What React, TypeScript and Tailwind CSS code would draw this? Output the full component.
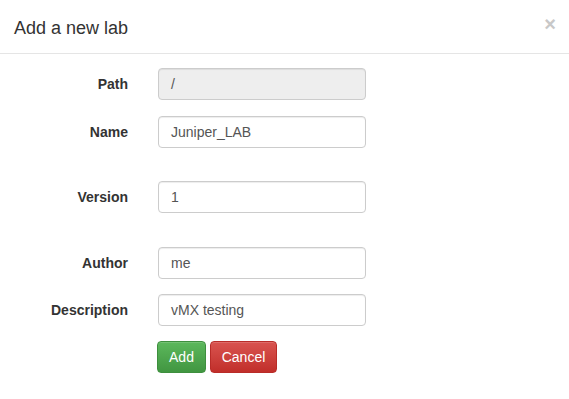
export default function App() {
    const rows = [
        { label: "Path", value: "/", disabled: true, mt: "mt-0" },
        { label: "Name", value: "Juniper_LAB", mt: "mt-[16px]" },
        { label: "Version", value: "1", mt: "mt-[33px]" },
        { label: "Author", value: "me", mt: "mt-[34px]" },
        { label: "Description", value: "vMX testing", mt: "mt-[15px]" },
    ];

    return (
        <div className="h-[399px] w-[569px] overflow-hidden bg-white font-['Liberation_Sans',Arial,sans-serif] text-[#333]">
            {/* header */}
            <div className="flex h-[54px] items-center justify-between border-b border-[#e5e5e5] pl-[14px] pr-[13px]">
                <h4 className="pt-[3px] text-[18px] leading-none">Add a new lab</h4>
                <span className="-mt-[6px] text-[20px] leading-none font-bold text-[#c8c8c8]">×</span>
            </div>

            {/* body */}
            <div className="flex flex-col pt-[14px]">
                {rows.map((row) => (
                    <div key={row.label} className={`flex items-center ${row.mt}`}>
                        <label className="w-[128px] text-right text-[14px] font-bold">
                            {row.label}
                        </label>
                        <div
                            className={`ml-[30px] flex h-[32px] w-[208px] items-center rounded-[4px] border border-[#ccc] px-[12px] text-[14px] text-[#555] shadow-[inset_0_1px_1px_rgba(0,0,0,0.075)] ${
                                row.disabled ? "bg-[#eee]" : "bg-white"
                            }`}
                        >
                            {row.value}
                        </div>
                    </div>
                ))}
                <div className="ml-[157px] mt-[15px] flex gap-[4px]">
                    <button className="h-[32px] w-[49px] rounded-[4px] border border-[#3e8f3e] bg-gradient-to-b from-[#5cb85c] to-[#419641] text-[14px] text-white shadow-[inset_0_1px_0_rgba(255,255,255,0.15)]">
                        Add
                    </button>
                    <button className="h-[32px] w-[67px] rounded-[4px] border border-[#b92c28] bg-gradient-to-b from-[#d9534f] to-[#c12e2a] text-[14px] text-white shadow-[inset_0_1px_0_rgba(255,255,255,0.15)]">
                        Cancel
                    </button>
                </div>
            </div>
        </div>
    );
}
